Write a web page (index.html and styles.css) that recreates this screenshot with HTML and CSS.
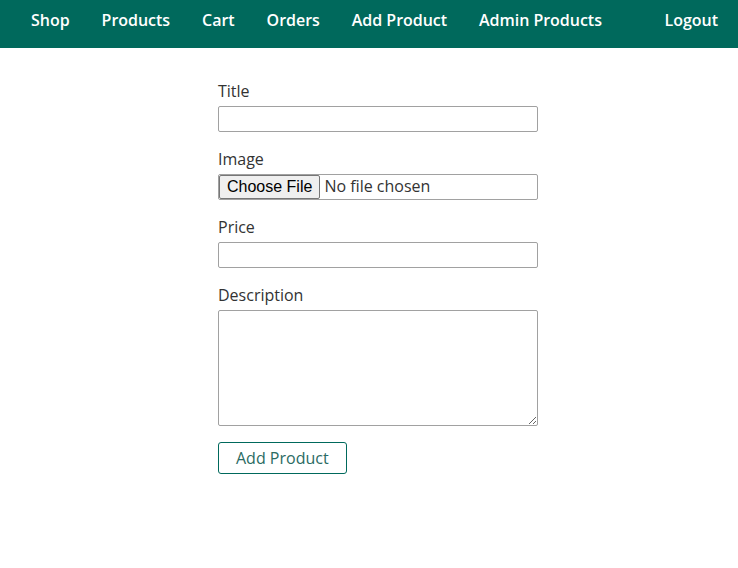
FILE: index.html
```html
<!DOCTYPE html>
<html lang="en">
<head>
<meta charset="utf-8">
<title>Add Product</title>
<link rel="stylesheet" href="styles.css">
</head>
<body>
<header class="main-header">
  <nav class="main-header__nav">
    <ul class="main-header__item-list">
      <li class="main-header__item"><a href="#">Shop</a></li>
      <li class="main-header__item"><a href="#">Products</a></li>
      <li class="main-header__item"><a href="#">Cart</a></li>
      <li class="main-header__item"><a href="#">Orders</a></li>
      <li class="main-header__item"><a href="#">Add Product</a></li>
      <li class="main-header__item"><a href="#">Admin Products</a></li>
    </ul>
    <ul class="main-header__item-list">
      <li class="main-header__item"><a href="#">Logout</a></li>
    </ul>
  </nav>
</header>
<main class="main">
  <form class="product-form">
    <div class="form-control">
      <label for="title">Title</label>
      <input type="text" id="title" name="title">
    </div>
    <div class="form-control">
      <label for="image">Image</label>
      <input type="file" id="image" name="image">
    </div>
    <div class="form-control">
      <label for="price">Price</label>
      <input type="number" id="price" name="price" step="0.01">
    </div>
    <div class="form-control">
      <label for="description">Description</label>
      <textarea id="description" name="description" rows="5"></textarea>
    </div>
    <button class="btn" type="submit">Add Product</button>
  </form>
</main>
</body>
</html>
```

FILE: styles.css
```css
* { box-sizing: border-box; }

body {
  margin: 0;
  padding: 0;
  font-family: "Open Sans", sans-serif;
  color: #333;
  background: #fff;
}

.main-header {
  width: 100%;
  height: 48px;
  background: #00695c;
  padding: 0 20px 8px 15px;
}

.main-header__nav {
  height: 100%;
  display: flex;
  align-items: center;
  justify-content: space-between;
}

.main-header__item-list {
  list-style: none;
  margin: 0;
  padding: 0;
  display: flex;
}

.main-header__item {
  margin: 0 16px;
}

.main-header__item-list:last-child .main-header__item {
  margin-right: 0;
}

.main-header__item a {
  color: #fff;
  text-decoration: none;
  font-size: 16px;
  font-weight: 600;
  letter-spacing: -0.03px;
}

.main {
  padding: 31px 0 0 18px;
}

.product-form {
  width: 320px;
  margin: 0 auto;
}

.form-control {
  margin-bottom: 15px;
}

.form-control label {
  display: block;
  font-size: 16px;
  line-height: 22px;
  padding-top: 1px;
  margin-bottom: 4px;
}

.form-control input,
.form-control textarea {
  display: block;
  width: 100%;
  margin: 0;
  border: 1px solid #a1a1a1;
  border-radius: 2px;
  font: inherit;
  font-size: 16px;
  padding: 0 4px;
  background: #fff;
}

.form-control input {
  height: 26px;
}

.form-control input[type="file"] {
  padding: 0;
  line-height: 23px;
}

.form-control input[type="file"]::file-selector-button {
  font-family: "Liberation Sans", Arial, sans-serif;
  font-size: 16px;
  height: 24px;
  margin: 0 4px 0 0;
  padding: 0 7px;
  border: 1px solid #767676;
  border-radius: 2px;
  background: #efefef;
  color: #000;
}

.form-control textarea {
  height: 116px;
  resize: vertical;
}

.btn {
  display: inline-block;
  font: inherit;
  font-size: 16px;
  line-height: 22px;
  height: 32px;
  padding: 4px 17px;
  color: #2b6b63;
  background: #fff;
  border: 1px solid #00695c;
  border-radius: 3px;
  cursor: pointer;
  margin-top: 1px;
}
```
